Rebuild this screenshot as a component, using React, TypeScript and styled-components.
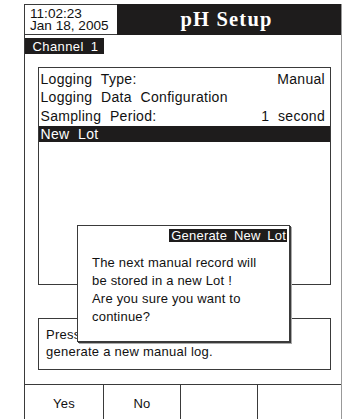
import styled, {createGlobalStyle} from "styled-components";

const GlobalStyle = createGlobalStyle`
    html, body {
        margin: 0;
        padding: 0;
        background: #fff;
        overflow: hidden;
    }
    body {
        font-family: "Liberation Sans", Arial, sans-serif;
        color: #111;
    }
`;

const INK = '#1e1c1c';
const LINE = '#3a3a3a';

export default function App() {
    return (
        <>
            <GlobalStyle/>
            <Frame>
                <TopBar>
                    <Clock>
                        <ClockLine>11:02:23</ClockLine>
                        <ClockLine>Jan 18, 2005</ClockLine>
                    </Clock>
                    <Title>pH Setup</Title>
                </TopBar>
                <ChannelTab>Channel 1</ChannelTab>
                <ListBox>
                    <Row><span>Logging Type:</span><span>Manual</span></Row>
                    <Row><span>Logging Data Configuration</span></Row>
                    <Row><span>Sampling Period:</span><span>1 second</span></Row>
                    <Row $selected>New Lot</Row>
                </ListBox>
                <HintBox>Press Yes to<br/>generate a new manual log.</HintBox>
                <SoftKeys>
                    <SoftKey>Yes</SoftKey>
                    <SoftKey>No</SoftKey>
                    <SoftKey/>
                    <SoftKey/>
                </SoftKeys>
                <Dialog>
                    <DialogHead>
                        <DialogTitle>Generate New Lot</DialogTitle>
                    </DialogHead>
                    <DialogText>
                        The next manual record will<br/>
                        be stored in a new Lot !<br/>
                        Are you sure you want to<br/>
                        continue?
                    </DialogText>
                </Dialog>
            </Frame>
        </>
    );
}

const Frame = styled.div`
    position: relative;
    margin: 4px 0 0 24px;
    width: 318px;
    height: 415px;
    overflow: hidden;
    box-sizing: border-box;
    border-left: 1px solid ${LINE};
    border-right: 1px solid #999;
`;

const TopBar = styled.div`
    display: flex;
    height: 31px;
`;

const Clock = styled.div`
    width: 92px;
    flex: none;
    box-sizing: border-box;
    border-top: 1px solid ${LINE};
    border-bottom: 1px solid ${LINE};
    padding: 1.5px 0 0 5px;
    font-size: 13.6px;
`;

const ClockLine = styled.div`
    height: 12.4px;
    line-height: 14px;
`;

const Title = styled.div`
    flex: 1;
    background: ${INK};
    color: #fff;
    font-family: "Liberation Serif", "Times New Roman", serif;
    font-weight: bold;
    font-size: 20.5px;
    letter-spacing: 1.2px;
    line-height: 31px;
    text-align: center;
    padding-right: 5px;
`;

const ChannelTab = styled.div`
    margin-top: 3px;
    width: 79px;
    height: 16px;
    box-sizing: border-box;
    padding: 1px 0 0 7.5px;
    background: ${INK};
    color: #fff;
    font-size: 13px;
    line-height: 15px;
    letter-spacing: 0.4px;
    word-spacing: 3px;
`;

const ListBox = styled.div`
    margin: 13px 10px 0 13px;
    height: 218px;
    box-sizing: border-box;
    border: 1px solid ${LINE};
    padding-top: 2px;
`;

const Row = styled.div<{$selected?: boolean}>`
    display: flex;
    justify-content: space-between;
    height: ${p => p.$selected ? 16 : 18.3}px;
    line-height: ${p => p.$selected ? 16 : 18.3}px;
    margin-top: ${p => p.$selected ? 1 : 0}px;
    padding: 0 5px 0 1.5px;
    background: ${p => p.$selected ? INK : 'transparent'};
    color: ${p => p.$selected ? '#fff' : '#111'};
    font-size: 14px;
    letter-spacing: 0.3px;
    word-spacing: 4.5px;
    white-space: nowrap;
`;

const HintBox = styled.div`
    margin: 33px 10px 0 13px;
    height: 52px;
    box-sizing: border-box;
    border: 1px solid ${LINE};
    padding: 7px 0 0 7px;
    font-size: 13px;
    line-height: 17px;
    letter-spacing: 0.25px;
    white-space: nowrap;
`;

const SoftKeys = styled.div`
    margin-top: 14px;
    display: grid;
    grid-template-columns: 78px 77px 77px 1fr;
    height: 40px;
    border-top: 1px solid ${LINE};
`;

const SoftKey = styled.div`
    text-align: center;
    font-size: 13px;
    line-height: 38px;
    letter-spacing: 0.3px;
    & + & {
        border-left: 1px solid ${LINE};
    }
`;

const Dialog = styled.div`
    position: absolute;
    left: 52px;
    top: 221px;
    width: 213px;
    height: 117px;
    box-sizing: border-box;
    background: #fff;
    border: 1px solid ${LINE};
    box-shadow: 1px 1px 0 ${LINE}, 2px 2px 0 #aaa;
`;

const DialogHead = styled.div`
    display: flex;
    justify-content: flex-end;
    padding: 3px 2px 0 0;
`;

const DialogTitle = styled.div`
    height: 13px;
    padding: 0 1px 0 2px;
    background: ${INK};
    color: #fff;
    font-size: 13px;
    line-height: 13px;
    letter-spacing: 0.2px;
    word-spacing: 3px;
`;

const DialogText = styled.div`
    margin-top: 11.7px;
    padding-left: 14px;
    font-size: 13px;
    line-height: 18.2px;
    letter-spacing: 0.2px;
    white-space: nowrap;
`;
